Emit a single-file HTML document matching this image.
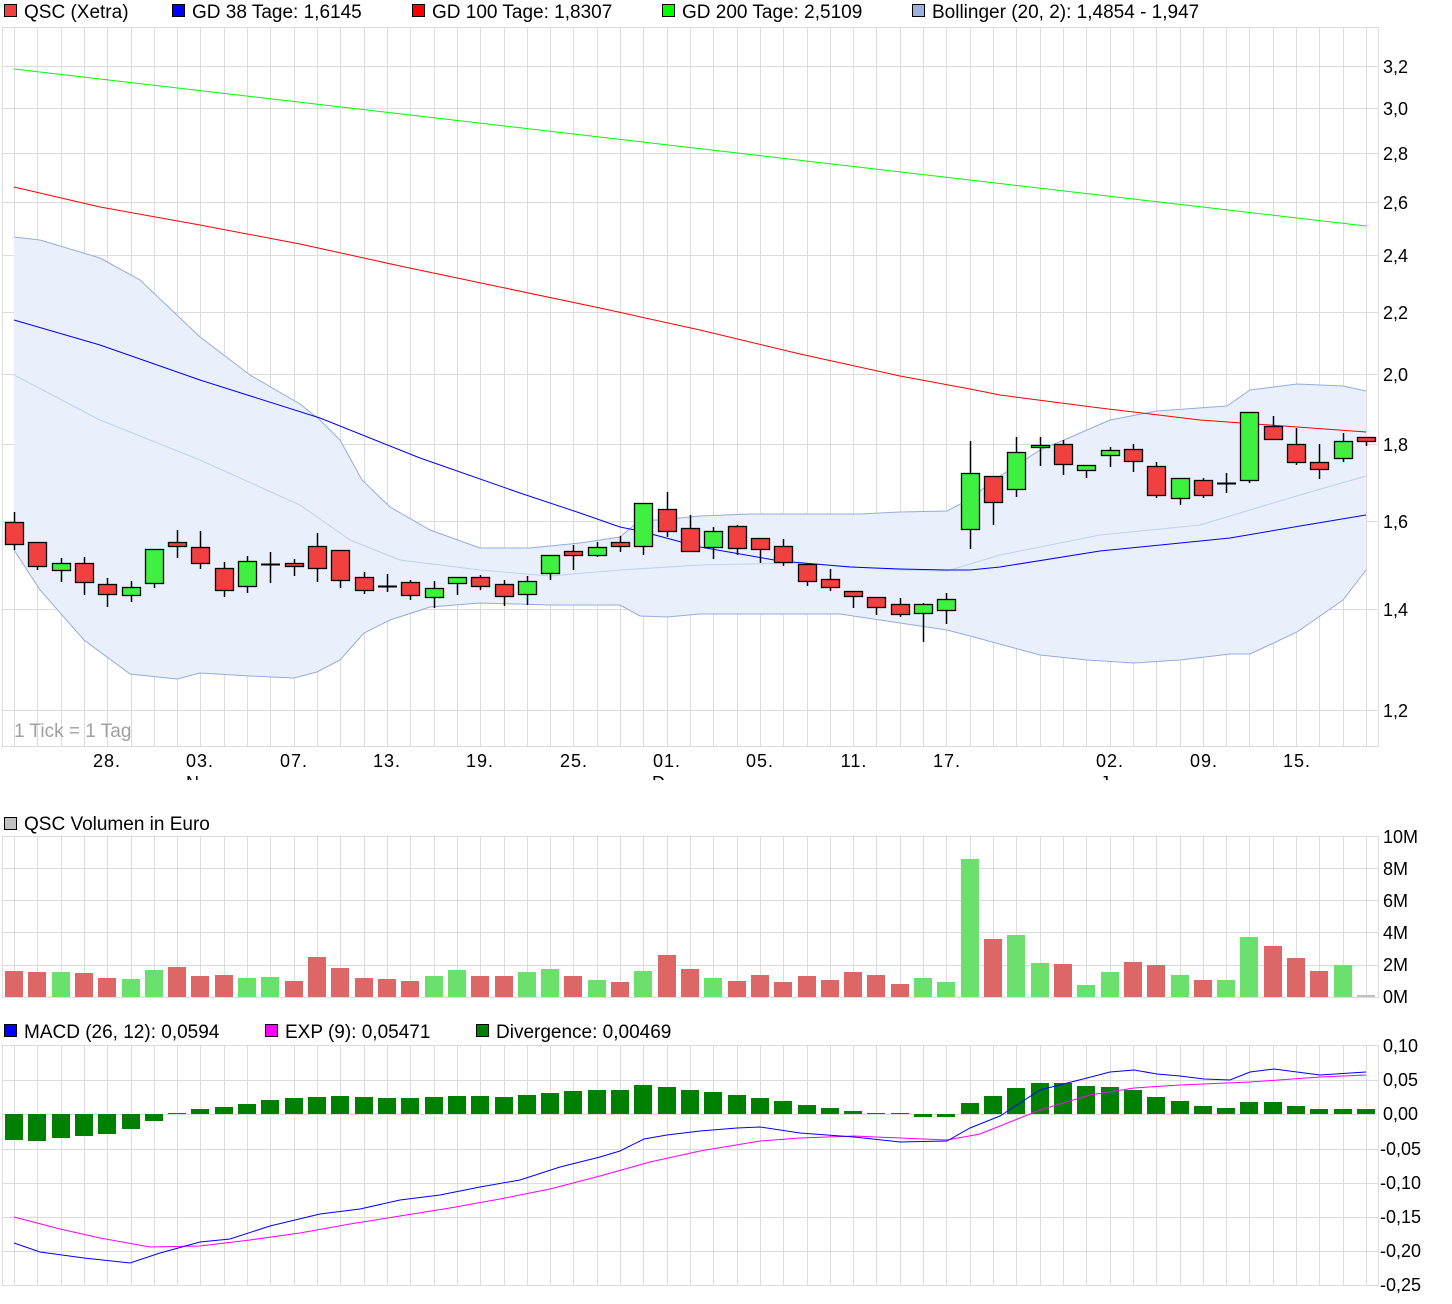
<!DOCTYPE html>
<html><head><meta charset="utf-8"><style>
html,body{margin:0;padding:0;background:#fff;}
svg{display:block;font-family:"Liberation Sans",sans-serif;}
</style></head><body>
<svg id="s" width="1452" height="1304" xmlns="http://www.w3.org/2000/svg">
<g id="grid"></g>
<g id="bands"></g>
<g id="lines"></g>
<g id="candles"></g>
<g id="vol"></g>
<g id="macd"></g>
<g font-size="19" fill="#000">
<rect x="4.5" y="4.5" width="12" height="12" fill="#f04040" stroke="#000"/><text x="24" y="18">QSC (Xetra)</text>
<rect x="172.5" y="4.5" width="12" height="12" fill="#0000ff" stroke="#000"/><text x="192" y="18">GD 38 Tage: 1,6145</text>
<rect x="412.5" y="4.5" width="12" height="12" fill="#ff0000" stroke="#000"/><text x="432" y="18">GD 100 Tage: 1,8307</text>
<rect x="662.5" y="4.5" width="12" height="12" fill="#00ff00" stroke="#000"/><text x="682" y="18">GD 200 Tage: 2,5109</text>
<rect x="912.5" y="4.5" width="12" height="12" fill="#9ab0dd" stroke="#000"/><text x="932" y="18">Bollinger (20, 2): 1,4854 - 1,947</text>
<rect x="4.5" y="817.5" width="12" height="12" fill="#c0c0c0" stroke="#000"/><text x="24" y="830">QSC Volumen in Euro</text>
<rect x="4.5" y="1024.5" width="12" height="12" fill="#0000ff" stroke="#000"/><text x="24" y="1038">MACD (26, 12): 0,0594</text>
<rect x="265.5" y="1024.5" width="12" height="12" fill="#ff00ff" stroke="#000"/><text x="285" y="1038">EXP (9): 0,05471</text>
<rect x="476.5" y="1024.5" width="12" height="12" fill="#008000" stroke="#000"/><text x="496" y="1038">Divergence: 0,00469</text>
</g>
<g font-size="18" fill="#000">
<text x="1383" y="73">3,2</text><text x="1383" y="115">3,0</text><text x="1383" y="160">2,8</text><text x="1383" y="209">2,6</text><text x="1383" y="262">2,4</text><text x="1383" y="319">2,2</text><text x="1383" y="381">2,0</text><text x="1383" y="451">1,8</text><text x="1383" y="528">1,6</text><text x="1383" y="616">1,4</text><text x="1383" y="717">1,2</text>
<text x="1383" y="843">10M</text><text x="1383" y="875">8M</text><text x="1383" y="907">6M</text><text x="1383" y="939">4M</text><text x="1383" y="971">2M</text><text x="1383" y="1003">0M</text>
<text x="1383" y="1052">0,10</text><text x="1383" y="1086">0,05</text><text x="1383" y="1120">0,00</text><text x="1380" y="1155">-0,05</text><text x="1380" y="1189">-0,10</text><text x="1380" y="1223">-0,15</text><text x="1380" y="1257">-0,20</text><text x="1380" y="1291">-0,25</text>
</g>
<g font-size="18" fill="#000" text-anchor="middle" letter-spacing="1">
<text x="107" y="767">28.</text><text x="200" y="767">03.</text><text x="294" y="767">07.</text><text x="387" y="767">13.</text><text x="480" y="767">19.</text><text x="574" y="767">25.</text><text x="667" y="767">01.</text><text x="760" y="767">05.</text><text x="854" y="767">11.</text><text x="947" y="767">17.</text><text x="1110" y="767">02.</text><text x="1204" y="767">09.</text><text x="1297" y="767">15.</text>
</g>
<clipPath id="mc"><rect x="0" y="772" width="1452" height="8"/></clipPath>
<g font-size="18" fill="#000" clip-path="url(#mc)"><text x="186" y="789">N</text><text x="652" y="789">D</text><text x="1100" y="789">J</text></g>
<text x="14" y="737" font-size="19" fill="#a0a0a0">1 Tick = 1 Tag</text>
</svg>
<script>
var NS="http://www.w3.org/2000/svg";
function el(p,t,a){var e=document.createElementNS(NS,t);for(var k in a)e.setAttribute(k,a[k]);document.getElementById(p).appendChild(e);return e;}
function X(i){return 14+i*(1352/58);}
var panels=[[27,746],[836,997],[1045,1285]];
panels.forEach(function(p){
 for(var i=0;i<59;i++){var x=Math.round(X(i))+0.5;el("grid","line",{x1:x,x2:x,y1:p[0],y2:p[1],stroke:"#dcdcdc"});}
 el("grid","line",{x1:2.5,x2:2.5,y1:p[0],y2:p[1],stroke:"#dcdcdc"});
 el("grid","line",{x1:1378.5,x2:1378.5,y1:p[0],y2:p[1],stroke:"#dcdcdc"});
 el("grid","line",{x1:2,x2:1379,y1:p[0]+0.5,y2:p[0]+0.5,stroke:"#dcdcdc"});
 el("grid","line",{x1:2,x2:1379,y1:p[1]+0.5,y2:p[1]+0.5,stroke:"#dcdcdc"});
});
[66,108,153,202,255,312,374,444,521,609,710].forEach(function(y){el("grid","line",{x1:2,x2:1379,y1:y+0.5,y2:y+0.5,stroke:"#dcdcdc"});});
[868,900,932,965].forEach(function(y){el("grid","line",{x1:2,x2:1379,y1:y+0.5,y2:y+0.5,stroke:"#dcdcdc"});});
[1080,1114,1149,1183,1217,1251].forEach(function(y){el("grid","line",{x1:2,x2:1379,y1:y+0.5,y2:y+0.5,stroke:"#dcdcdc"});});
function pts(a){return a.map(function(p){return p[0]+","+p[1];}).join(" ");}
var up=[[14,237],[40,240],[100,258],[140,280],[200,337],[250,375],[300,404],[320,420],[340,440],[362,480],[390,507],[430,530],[480,548],[530,548],[580,543],[620,537],[640,520],[660,520],[700,516],[750,514],[860,514],[900,512],[947,511],[970,499],[994,480],[1040,450],[1064,440],[1110,420],[1157,411],[1227,406],[1250,390],[1297,384],[1343,386],[1366,391]];
var lo=[[14,550],[40,590],[84,640],[130,674],[177,679],[200,673],[250,676],[294,678],[317,672],[340,660],[364,633],[390,620],[430,607],[480,603],[550,605],[620,605],[640,616],[667,617],[700,614],[750,614],[840,614],[900,623],[947,630],[970,636],[1040,655],[1087,660],[1134,663],[1180,660],[1230,654],[1250,654],[1297,632],[1343,600],[1366,570]];
var mid=[[14,375],[100,420],[200,460],[300,505],[350,540],[400,560],[480,570],[550,576],[620,570],[700,565],[800,563],[900,570],[947,571],[1000,555],[1100,535],[1200,525],[1250,510],[1300,495],[1366,476]];
el("bands","polygon",{points:pts(up.concat(lo.slice().reverse())),fill:"#eaf0fb"});
el("bands","polyline",{points:pts(up),fill:"none",stroke:"#93acdf"});
el("bands","polyline",{points:pts(lo),fill:"none",stroke:"#93acdf"});
el("bands","polyline",{points:pts(mid),fill:"none",stroke:"#bcd0f8"});
el("lines","polyline",{points:"14,69 1366,226",fill:"none",stroke:"#00ff00"});
el("lines","polyline",{points:pts([[14,187],[100,207],[200,225],[300,244],[400,266],[500,287],[600,308],[700,330],[800,354],[900,376],[970,389],[1000,395],[1100,408],[1200,420],[1366,432]]),fill:"none",stroke:"#ff0000"});
el("lines","polyline",{points:pts([[14,320],[100,345],[200,380],[320,418],[420,458],[520,493],[580,513],[620,527],[640,531],[700,547],[780,561],[850,567],[900,569],[947,570],[970,570],[1000,567],[1100,551],[1230,538],[1300,526],[1366,515]]),fill:"none",stroke:"#0000ff"});
var C=[[522,544,512,550,"r"],[542,566,542,570,"r"],[563,570,558,582,"g"],[563,582,557,595,"r"],[584,594,578,607,"r"],[587,595,581,602,"g"],[549,583,549,588,"g"],[542,546,530,558,"r"],[547,563,531,569,"r"],[568,590,562,597,"r"],[561,586,556,593,"g"],[564,564,552,583,"d"],[563,566,559,576,"r"],[546,568,533,582,"r"],[550,580,550,588,"r"],[577,590,572,594,"r"],[586,586,574,592,"d"],[582,595,580,600,"r"],[588,597,581,608,"g"],[577,583,577,595,"g"],[577,586,575,590,"r"],[584,596,580,606,"r"],[581,594,576,605,"g"],[555,573,555,580,"g"],[551,555,545,570,"r"],[547,555,542,557,"g"],[542,546,536,552,"r"],[503,546,503,555,"g"],[509,531,492,537,"r"],[528,551,515,552,"r"],[531,547,527,559,"g"],[526,548,525,555,"r"],[538,549,538,563,"r"],[546,562,539,566,"r"],[564,581,564,586,"r"],[579,587,569,591,"r"],[591,596,591,608,"r"],[597,607,597,615,"r"],[604,614,598,617,"r"],[604,613,603,642,"g"],[599,610,593,624,"g"],[473,529,441,549,"g"],[476,502,476,525,"r"],[452,489,437,497,"g"],[445,447,437,466,"g"],[444,464,440,475,"r"],[465,470,465,478,"g"],[450,455,447,467,"g"],[449,461,444,472,"r"],[466,495,462,498,"r"],[478,498,478,505,"g"],[480,495,478,498,"r"],[483,483,473,493,"d"],[412,480,412,483,"g"],[426,439,416,440,"r"],[444,462,428,465,"r"],[462,469,444,479,"r"],[441,458,433,462,"g"],[437,441,437,446,"r"]];
C.forEach(function(c,i){var x=Math.round(X(i));
 el("candles","line",{x1:x+0.5,x2:x+0.5,y1:c[2],y2:c[3],stroke:"#000","stroke-width":1.5});
 if(c[4]=="d"){el("candles","line",{x1:x-9,x2:x+10,y1:c[0]+0.5,y2:c[0]+0.5,stroke:"#000","stroke-width":2});}
 else el("candles","rect",{x:x-8.5,y:c[0]+0.5,width:18,height:Math.max(c[1]-c[0],2),fill:c[4]=="g"?"#40f040":"#f04040",stroke:"#000","stroke-width":1.3});
});
var V=[971,972,972,973,978,979,970,967,976,975,978,977,981,957,968,978,979,981,976,970,976,976,972,969,976,980,982,971,955,969,978,981,975,982,976,980,972,975,984,978,982,859,939,935,963,964,985,972,962,965,975,980,980,937,946,958,971,965,995];
V.forEach(function(v,i){var x=Math.round(X(i));var col=i==58?"#c0c0c0":(C[i][4]=="g"||(C[i][4]=="d"&&i!=16)?"#6ce06c":"#dd6666");
 el("vol","rect",{x:x-9,y:v,width:18,height:997-v,fill:col});});
var D=[1140,1141,1138,1136,1134,1129,1121,1113,1109,1107,1104,1100,1098,1097,1096,1097,1098,1098,1097,1096,1096,1097,1095,1093,1091,1090,1090,1085,1087,1090,1092,1095,1098,1101,1105,1108,1111,1113,1113,1117,1117,1103,1096,1088,1083,1083,1086,1087,1090,1097,1101,1106,1108,1102,1102,1106,1109,1109,1109];
D.forEach(function(d,i){var x=Math.round(X(i));var y0=Math.min(d,1114),h=Math.abs(d-1114);if(h<1)h=1;
 el("macd","rect",{x:x-9,y:y0,width:18,height:h,fill:"#008000"});});
el("macd","polyline",{points:pts([[14,1217],[60,1229],[100,1238],[150,1247],[200,1246],[250,1240],[300,1233],[350,1224],[400,1216],[450,1208],[500,1199],[550,1189],[600,1176],[650,1162],[700,1151],[760,1141],[800,1138],[854,1136],[900,1138],[947,1140],[980,1134],[1040,1110],[1090,1095],[1134,1088],[1180,1085],[1250,1082],[1320,1077],[1366,1075]]),fill:"none",stroke:"#ff00ff"});
el("macd","polyline",{points:pts([[14,1243],[40,1252],[84,1258],[130,1263],[160,1253],[200,1242],[230,1239],[270,1226],[320,1214],[360,1209],[400,1200],[440,1195],[480,1187],[520,1180],[560,1167],[600,1157],[620,1151],[644,1139],[667,1135],[700,1131],[737,1128],[760,1127],[800,1133],[854,1137],[900,1142],[947,1141],[970,1128],[1000,1116],[1040,1090],[1087,1078],[1110,1072],[1134,1070],[1157,1074],[1180,1076],[1204,1079],[1230,1080],[1250,1072],[1274,1069],[1320,1075],[1366,1072]]),fill:"none",stroke:"#0000ff"});
</script>
</body></html>
